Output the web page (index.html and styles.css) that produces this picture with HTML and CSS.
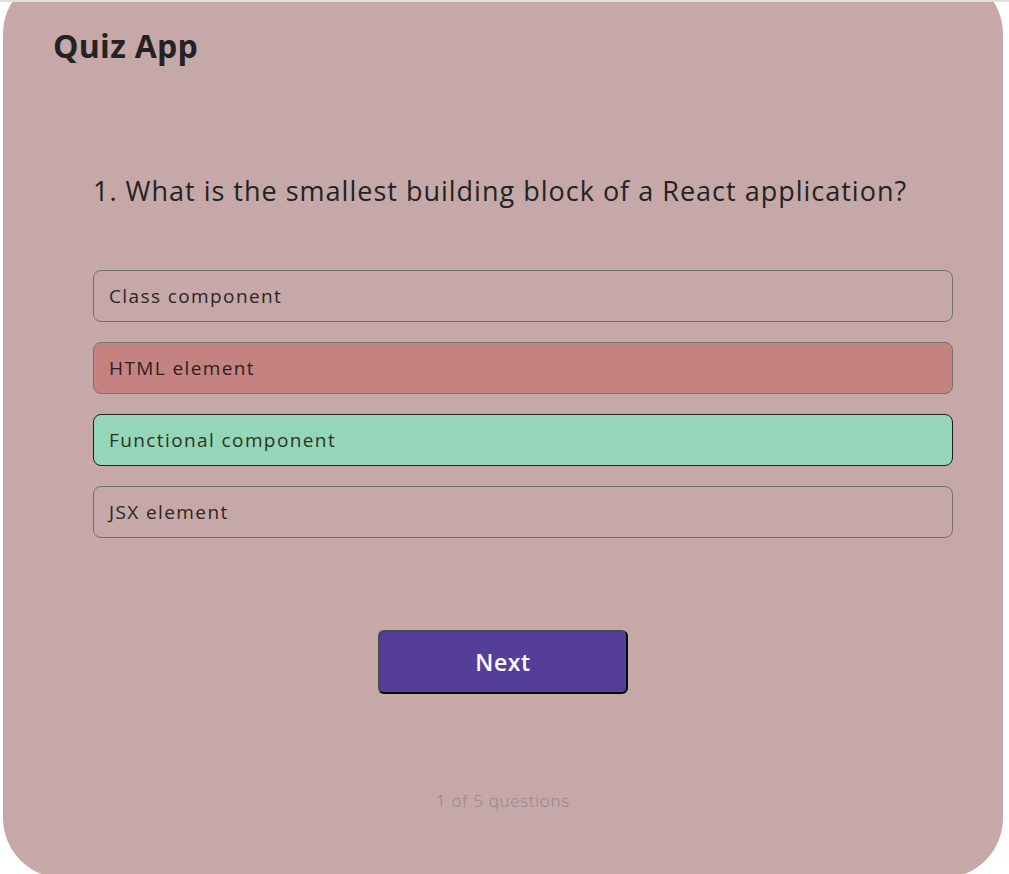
FILE: index.html
```html
<!DOCTYPE html>
<html lang="en">
<head>
<meta charset="utf-8">
<title>Quiz App</title>
<link rel="stylesheet" href="styles.css">
</head>
<body>
<div class="topbar"></div>
<div class="viewport">
  <main class="card">
    <h1 class="app-title">Quiz App</h1>
    <section class="quiz">
      <h2 class="question">1. What is the smallest building block of a React application?</h2>
      <ul class="options">
        <li class="option">Class component</li>
        <li class="option option-wrong">HTML element</li>
        <li class="option option-correct">Functional component</li>
        <li class="option">JSX element</li>
      </ul>
    </section>
    <div class="actions">
      <button class="next-btn" type="button">Next</button>
    </div>
    <p class="progress"><span class="progress-current">1</span> of 5 questions</p>
  </main>
</div>
</body>
</html>
```

FILE: styles.css
```css
* { box-sizing: border-box; }

html, body {
  margin: 0;
  padding: 0;
  background: #ffffff;
}

body {
  font-family: "Open Sans", "Noto Sans", sans-serif;
  color: #262626;
}

.topbar {
  height: 2px;
  background: #dfe2df;
}

.viewport {
  height: 872px;
  overflow: hidden;
}

.card {
  margin: -28px 0 0 3px;
  width: 1000px;
  height: 904px;
  border-radius: 60px;
  background: #c6a8a9;
  padding: 49px 50px 0 50px;
}

.app-title {
  margin: 0;
  font-size: 32px;
  line-height: 45px;
  font-weight: 700;
  color: #232323;
  letter-spacing: 0.3px;
}

.quiz {
  margin-left: 40px;
}

.question {
  margin: 104px 0 0 0;
  font-size: 27px;
  line-height: 38px;
  font-weight: 500;
  letter-spacing: 1px;
  color: #232323;
}

.options {
  list-style: none;
  margin: 60px 0 0 0;
  padding: 0;
  display: flex;
  flex-direction: column;
  gap: 20px;
}

.option {
  height: 52px;
  border: 1px solid #777070;
  border-radius: 8px;
  padding: 0 15px;
  display: flex;
  align-items: center;
  font-size: 19px;
  font-weight: 400;
  letter-spacing: 1.4px;
  color: #2d2526;
}

.option-wrong {
  background: #c48381;
  color: #2e2020;
}

.option-correct {
  background: #95d6bb;
  border-color: #1c1c1c;
  color: #2c3320;
}

.actions {
  margin-top: 92px;
  display: flex;
  justify-content: center;
}

.next-btn {
  width: 250px;
  height: 64px;
  background: #553d9a;
  border: 2px solid #4a4a4a;
  border-right-color: #0a0a0a;
  border-bottom-color: #050505;
  border-radius: 6px;
  color: #ffffff;
  font-family: inherit;
  font-size: 23px;
  font-weight: 600;
  letter-spacing: 0.6px;
}

.progress {
  margin: 94px 0 0 0;
  text-align: center;
  font-size: 17px;
  line-height: 26px;
  font-weight: 300;
  letter-spacing: 0.7px;
  color: #96858b;
}

.progress-current {
  color: #c06a6e;
}
```
